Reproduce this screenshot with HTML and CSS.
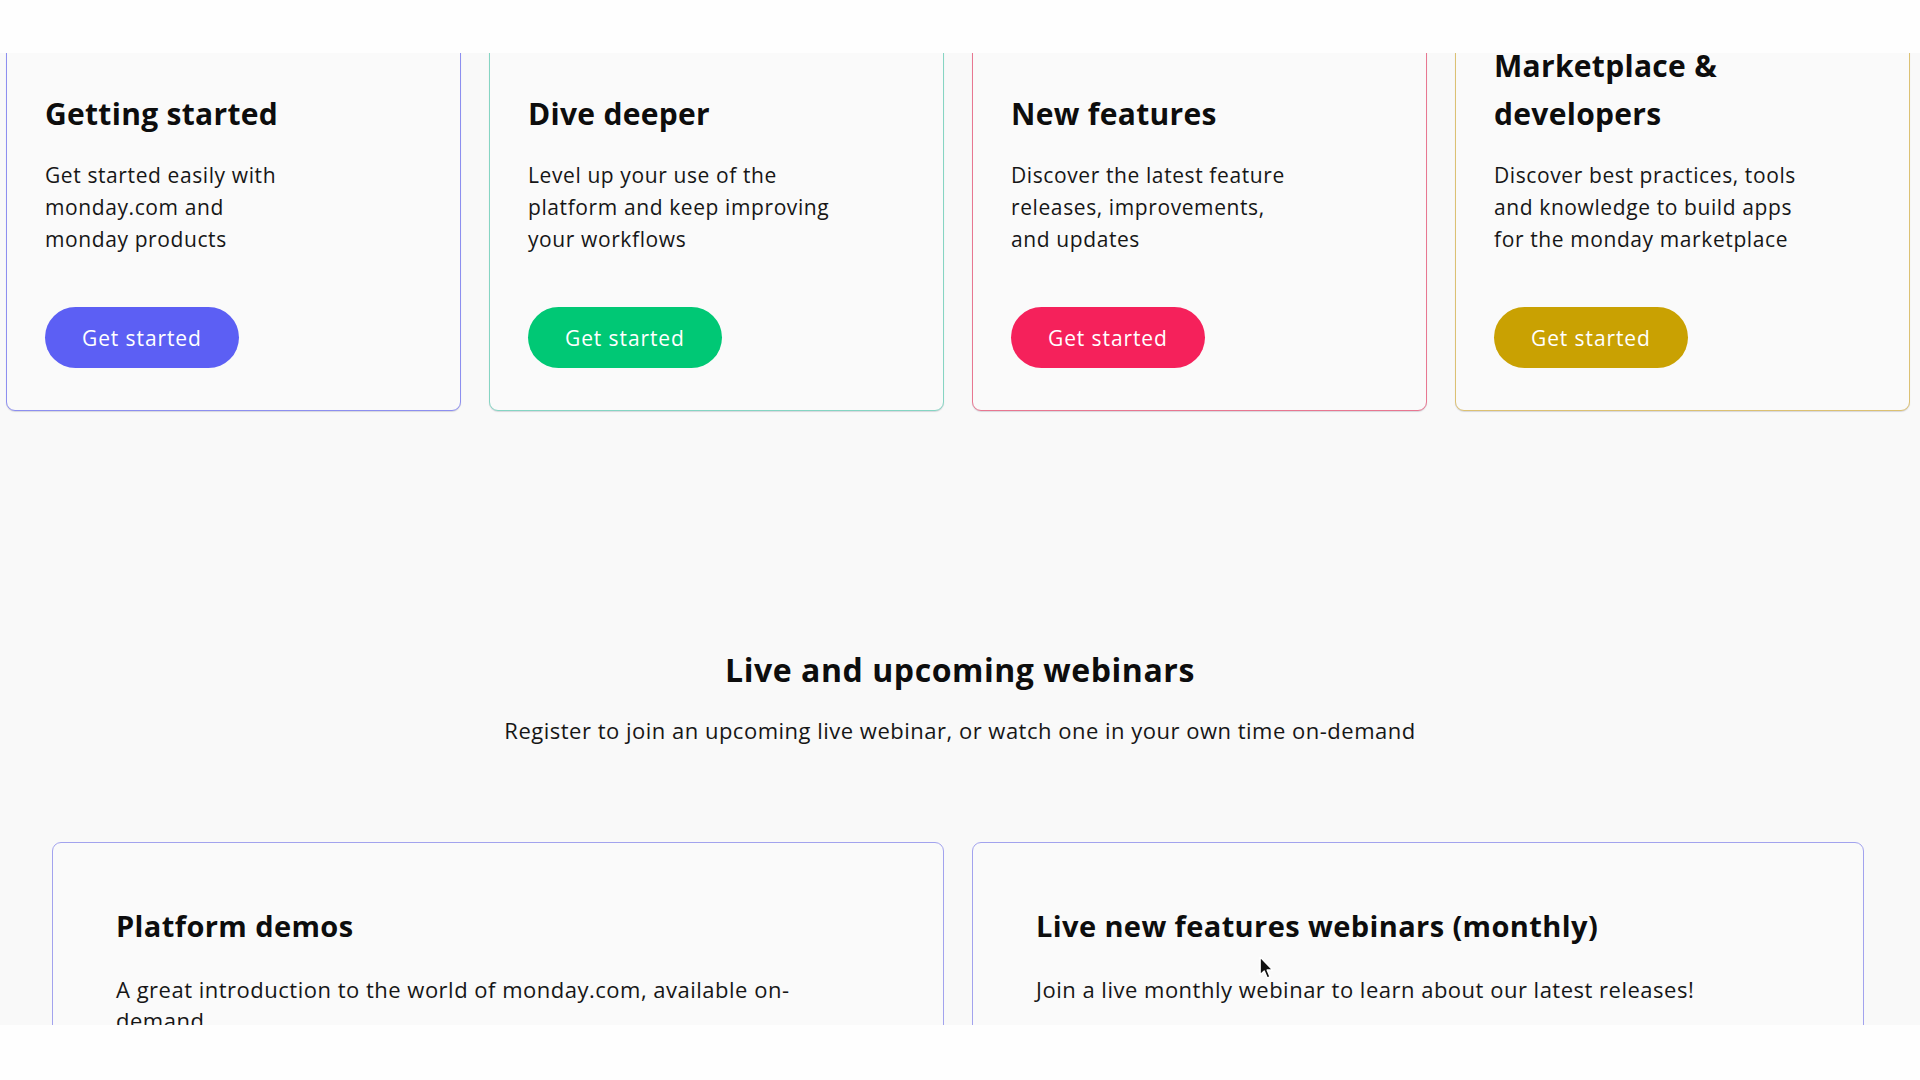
FILE: index.html
```html
<!DOCTYPE html>
<html lang="en">
<head>
<meta charset="utf-8">
<title>monday.com learning center</title>
<link rel="stylesheet" href="styles.css">
</head>
<body>
<div class="band band-top"></div>

<main class="page">
  <section class="paths">
    <article class="path-card path-purple">
      <h3 class="path-title">Getting started</h3>
      <p class="path-desc">Get started easily with<br>monday.com and<br>monday products</p>
      <a class="path-btn btn-purple" href="#">Get started</a>
    </article>
    <article class="path-card path-green">
      <h3 class="path-title">Dive deeper</h3>
      <p class="path-desc">Level up your use of the<br>platform and keep improving<br>your workflows</p>
      <a class="path-btn btn-green" href="#">Get started</a>
    </article>
    <article class="path-card path-red">
      <h3 class="path-title">New features</h3>
      <p class="path-desc">Discover the latest feature<br>releases, improvements,<br>and updates</p>
      <a class="path-btn btn-red" href="#">Get started</a>
    </article>
    <article class="path-card path-gold">
      <h3 class="path-title">Marketplace &amp;<br>developers</h3>
      <p class="path-desc">Discover best practices, tools<br>and knowledge to build apps<br>for the monday marketplace</p>
      <a class="path-btn btn-gold" href="#">Get started</a>
    </article>
  </section>

  <section class="webinars">
    <h2 class="webinars-title">Live and upcoming webinars</h2>
    <p class="webinars-sub">Register to join an upcoming live webinar, or watch one in your own time on-demand</p>
    <div class="webinar-grid">
      <article class="webinar-card">
        <h3 class="webinar-name">Platform demos</h3>
        <p class="webinar-desc">A great introduction to the world of monday.com, available on-demand</p>
      </article>
      <article class="webinar-card">
        <h3 class="webinar-name">Live new features webinars (monthly)</h3>
        <p class="webinar-desc">Join a live monthly webinar to learn about our latest releases!</p>
      </article>
    </div>
  </section>
</main>

<div class="band band-bottom"></div>

<svg class="cursor" width="16" height="24" viewBox="0 0 14 21" aria-hidden="true">
  <path d="M1 1 L1 16.5 L4.6 13.1 L7.2 19.2 L9.6 18.2 L7.1 12.3 L12 12.3 Z" fill="#111" stroke="#fff" stroke-width="1.2" stroke-linejoin="round"/>
</svg>
</body>
</html>
```
FILE: styles.css
```css
* { box-sizing: border-box; }

html, body {
  margin: 0;
  height: 1080px;
  overflow: hidden;
}

body {
  background: #f9f9f9;
  font-family: "Open Sans", "Noto Sans", sans-serif;
  color: #161616;
  position: relative;
}

/* white bars of the captured frame, over the page */
.band {
  position: fixed;
  left: 0;
  right: 0;
  background: #fefefe;
  z-index: 5;
}
.band-top { top: 0; height: 53px; }
.band-bottom { top: 1025px; bottom: 0; }

.cursor {
  position: fixed;
  left: 1259px;
  top: 956px;
  z-index: 6;
}

.page {
  display: flex;
  flex-direction: column;
}

/* ---- learning path cards ---- */
.paths {
  display: grid;
  grid-template-columns: repeat(4, 455px);
  column-gap: 28px;
  margin-left: 6px;
}

.path-card {
  display: flex;
  flex-direction: column;
  justify-content: flex-end;
  align-items: flex-start;
  padding: 41px 38px 42px 38px;
  border: 1.5px solid;
  border-radius: 9px;
  background: #fafafa;
  box-shadow: 0 1px 1px rgba(60, 60, 90, 0.18);
}
.path-purple { border-color: #8d8ff0; }
.path-green  { border-color: #86d5c3; }
.path-red    { border-color: #e87791; }
.path-gold   { border-color: #dcc173; }

.path-title {
  margin: 0;
  font-size: 30px;
  line-height: 48px;
  font-weight: 700;
  letter-spacing: 0.3px;
  color: #0d0d0d;
}

.path-desc {
  margin: 21px 0 0;
  font-size: 21px;
  line-height: 32px;
  font-weight: 400;
  letter-spacing: 0.6px;
  color: #161616;
}

.path-btn {
  margin-top: 52px;
  height: 61px;
  padding: 0 37px;
  display: inline-flex;
  align-items: center;
  justify-content: center;
  border-radius: 31px;
  color: #fff;
  text-decoration: none;
  font-size: 21px;
  letter-spacing: 0.9px;
  font-weight: 400;
}
.btn-purple { background: #5c5ff4; }
.btn-green  { background: #00c875; }
.btn-red    { background: #f5215b; }
.btn-gold   { background: #c9a102; }

/* ---- webinars ---- */
.webinars {
  margin-top: 237px;
  display: flex;
  flex-direction: column;
  align-items: center;
}

.webinars-title {
  margin: 0;
  font-size: 32px;
  line-height: 43px;
  font-weight: 700;
  letter-spacing: 0.55px;
  color: #0d0d0d;
}

.webinars-sub {
  margin: 23px 0 0;
  font-size: 22px;
  line-height: 32px;
  letter-spacing: 0.5px;
  color: #161616;
}

.webinar-grid {
  align-self: flex-start;
  margin: 96px 0 0 52px;
  display: grid;
  grid-template-columns: repeat(2, 892px);
  column-gap: 28px;
}

.webinar-card {
  min-height: 220px;
  padding: 63px 63px 40px;
  border: 1.5px solid #a2a3ee;
  border-radius: 9px;
  background: #fafafa;
}

.webinar-name {
  margin: 0;
  font-size: 29px;
  line-height: 40px;
  font-weight: 700;
  letter-spacing: 0.4px;
  color: #0d0d0d;
}

.webinar-desc {
  margin: 28px 0 0;
  max-width: 720px;
  font-size: 22px;
  line-height: 31px;
  letter-spacing: 0.5px;
  color: #161616;
}
```
